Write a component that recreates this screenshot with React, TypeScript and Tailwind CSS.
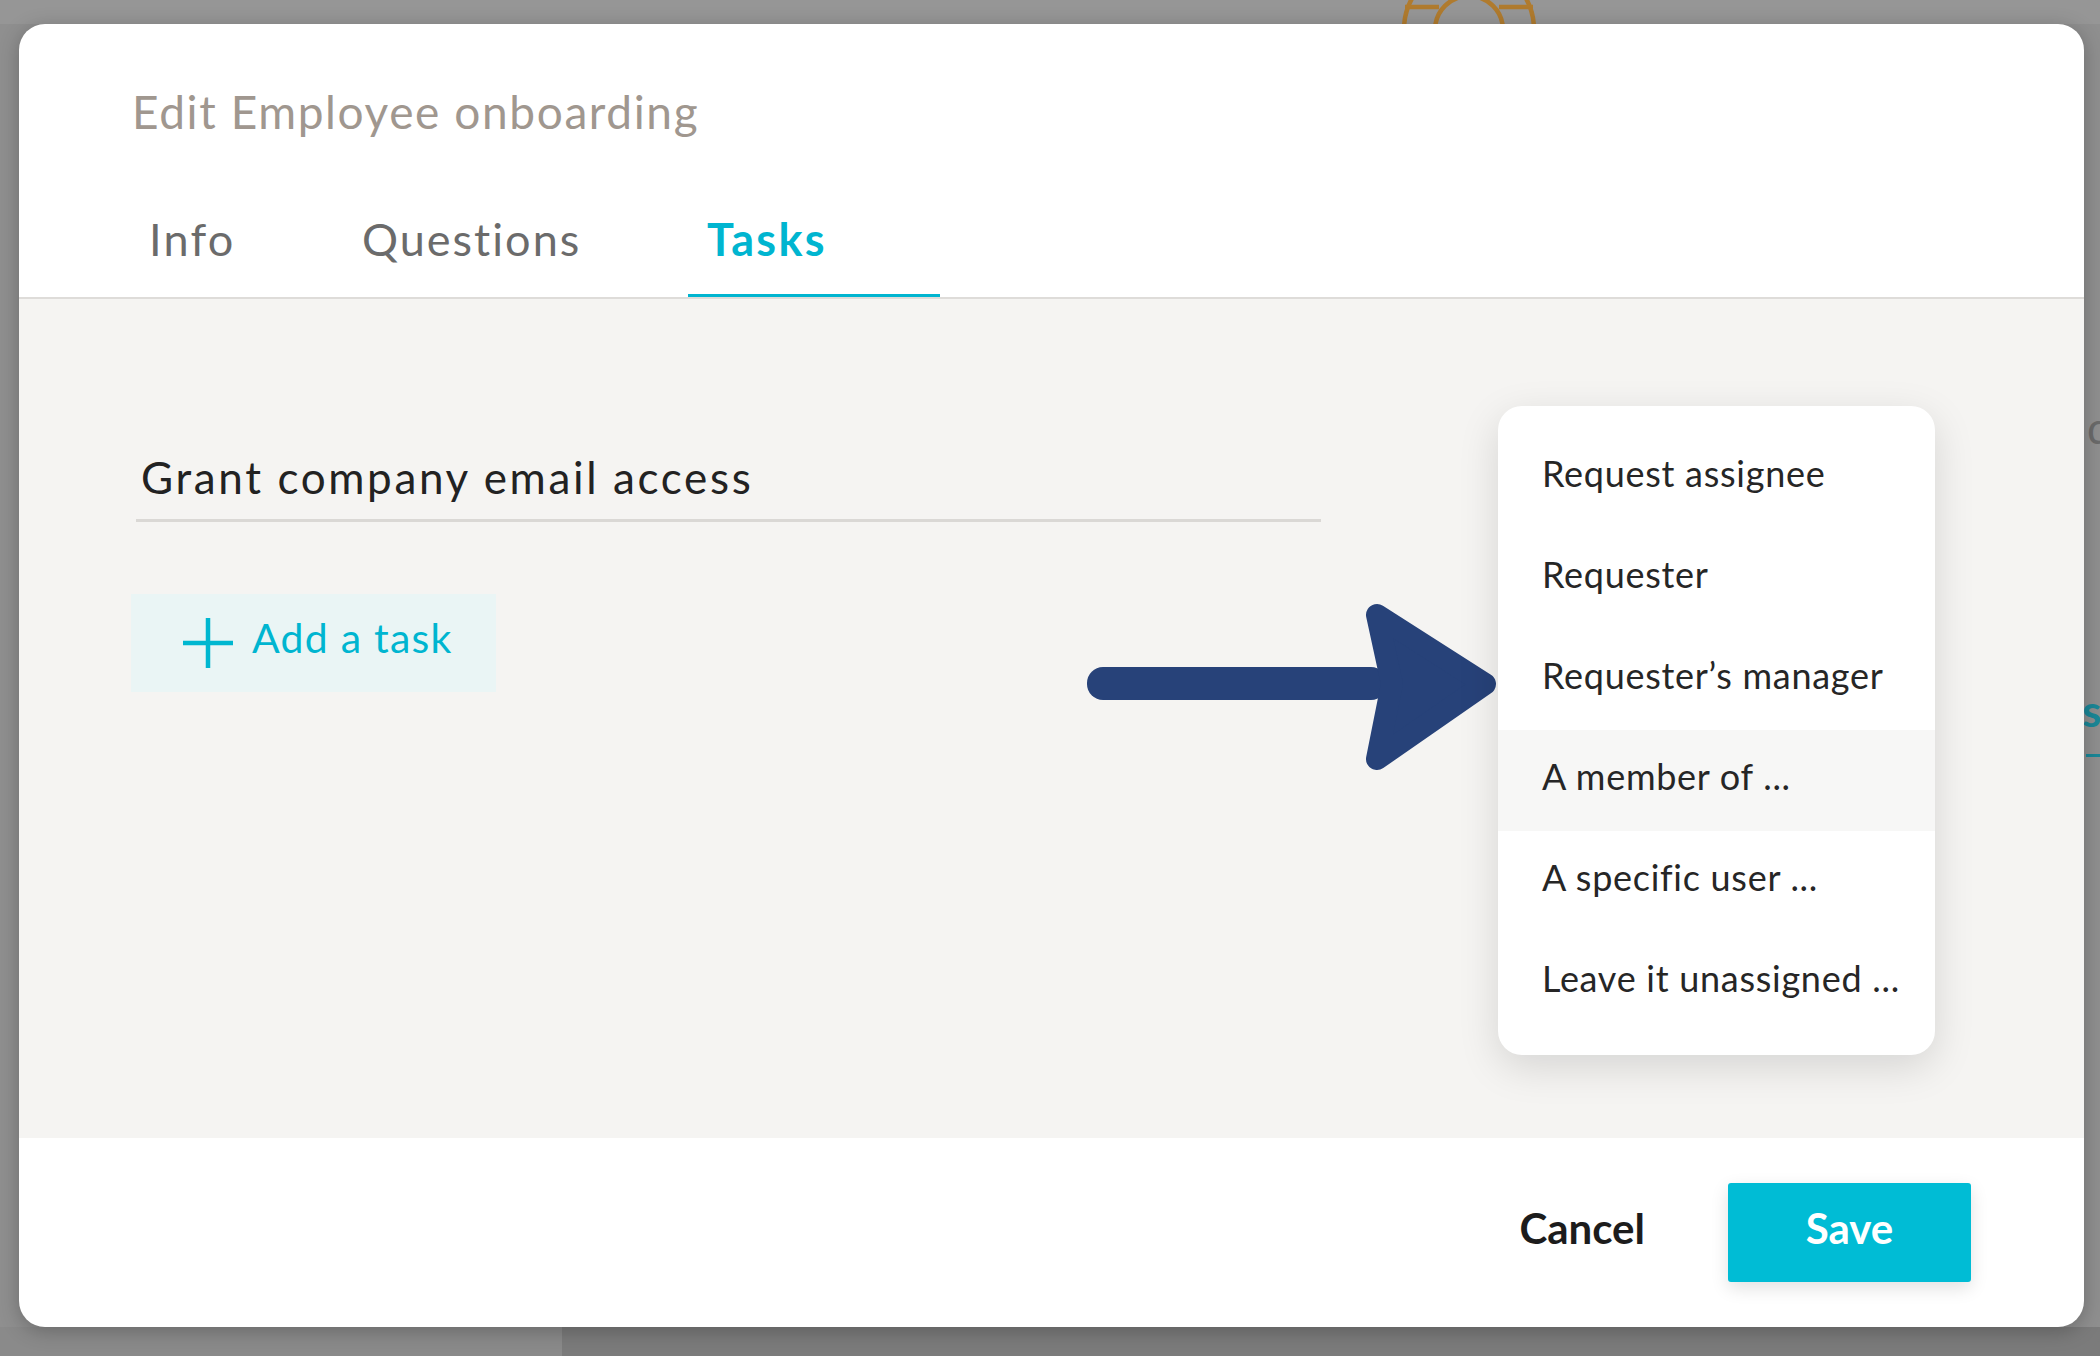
import React from 'react'

const font = "font-['Lato','Noto_Sans',sans-serif]"

const options = [
  'Request assignee',
  'Requester',
  'Requester’s manager',
  'A member of ...',
  'A specific user ...',
  'Leave it unassigned ...',
]

const PlusIcon = () => (
  <svg width="52" height="52" viewBox="0 0 52 52" fill="none">
    <path d="M26 1V51M1 26H51" stroke="#00b7d0" strokeWidth="4.5" />
  </svg>
)

const Lifebuoy = () => (
  <svg width="150" height="24" viewBox="0 0 150 24" fill="none">
    <circle cx="74" cy="30" r="65" stroke="#b07b2e" strokeWidth="4.5" />
    <circle cx="74" cy="30" r="34" stroke="#b07b2e" strokeWidth="4.5" />
    <path d="M10 7H44M104 7H138" stroke="#b07b2e" strokeWidth="4.5" />
  </svg>
)

// annotation arrow pointing at the menu
const Arrow = () => (
  <svg width="420" height="170" viewBox="1080 600 420 170" fill="none">
    <rect x="1087" y="665" width="300" height="33" rx="16" fill="#274279" />
    <polygon
      points="1377,613 1485,682 1377,757 1392,682"
      fill="#274279"
      stroke="#274279"
      strokeWidth="22"
      strokeLinejoin="round"
    />
  </svg>
)

export default function App() {
  return (
    <div className={`relative h-[1356px] w-[2100px] overflow-hidden bg-[#8f8f8f] ${font}`}>
      {/* page behind the overlay */}
      <div className="absolute left-0 top-0 h-[24px] w-full bg-[#969696]" />
      <div className="absolute left-[1395px] top-0">
        <Lifebuoy />
      </div>
      <div className="absolute bottom-0 left-0 h-[29px] w-[562px] bg-[#8a8a8a]" />
      <div className="absolute bottom-0 left-[562px] h-[29px] w-[1538px] bg-[#7b7b7b]" />
      <div className="absolute left-[2087px] top-[405px] text-[44px] leading-none text-[#6a6a6a]">d</div>
      <div className="absolute left-[2082px] top-[688px] text-[44px] font-bold leading-none text-[#1a8797]">st</div>
      <div className="absolute left-[2086px] top-[754px] h-[3px] w-[20px] bg-[#1a8797]" />

      {/* modal */}
      <div className="relative ml-[19px] mt-[24px] flex h-[1303px] w-[2065px] flex-col overflow-hidden rounded-[26px] bg-white shadow-[0_4px_20px_rgba(0,0,0,0.25)]">
        {/* header */}
        <div className="border-b-2 border-[#dedcd9]">
          <h1 className="pl-[113px] pt-[65px] text-[46px] font-normal leading-none tracking-[0.035em] text-[#a0978f]">
            Edit Employee onboarding
          </h1>
          <div className="mt-[82px] flex pl-[111px]">
            <div className="w-[213px] border-b-[3px] border-transparent pb-[30px] pl-[19px] text-[45px] leading-none tracking-[0.05em] text-[#6b6b6b]">
              Info
            </div>
            <div className="w-[345px] border-b-[3px] border-transparent pb-[30px] pl-[19px] text-[45px] leading-none tracking-[0.045em] text-[#6b6b6b]">
              Questions
            </div>
            <div className="w-[252px] border-b-[3px] border-[#00b5d0] pb-[32px] pl-[19px] text-[45px] font-bold leading-none tracking-[0.05em] text-[#00b5d0]">
              Tasks
            </div>
          </div>
        </div>

        {/* body */}
        <div className="relative h-[839px] bg-[#f5f4f2] pl-[112px] pt-[156px]">
          <div className="ml-[5px] w-[1185px] border-b-[3px] border-[#dad8d5] pb-[20px] pl-[5px] text-[44px] leading-none tracking-[0.06em] text-[#222222]">
            Grant company email access
          </div>

          <button className="mt-[72px] flex h-[98px] w-[365px] items-center gap-[18px] bg-[#eaf5f5] pl-[51px] text-[41px] leading-none tracking-[0.03em] text-[#00b5d0]">
            <PlusIcon />
            <span className="pb-[12px]">Add a task</span>
          </button>

          <div className="absolute left-[1061px] top-[303px]">
            <Arrow />
          </div>

          {/* assignee menu */}
          <div className="absolute left-[1479px] top-[107px] w-[437px] rounded-[24px] bg-white pb-[22px] pt-[21px] shadow-[0_12px_40px_rgba(0,0,0,0.13)]">
            {options.map((label, i) => (
              <div
                key={label}
                className={`flex h-[101px] items-center pb-[9px] pl-[44px] text-[36px] leading-none tracking-[0.02em] text-[#262626] ${
                  i === 3 ? 'bg-[#f7f7f6]' : ''
                }`}
              >
                {label}
              </div>
            ))}
          </div>
        </div>

        {/* footer */}
        <div className="flex flex-1 items-center justify-end gap-[83px] pr-[113px]">
          <button className="pb-[10px] text-[42px] font-bold leading-none text-[#1c1c1c]">Cancel</button>
          <button className="h-[99px] w-[243px] rounded-[3px] bg-[#00bcd5] pb-[10px] text-[42px] font-bold leading-none text-white shadow-[0_6px_18px_rgba(0,0,0,0.12)]">
            Save
          </button>
        </div>
      </div>
    </div>
  )
}
